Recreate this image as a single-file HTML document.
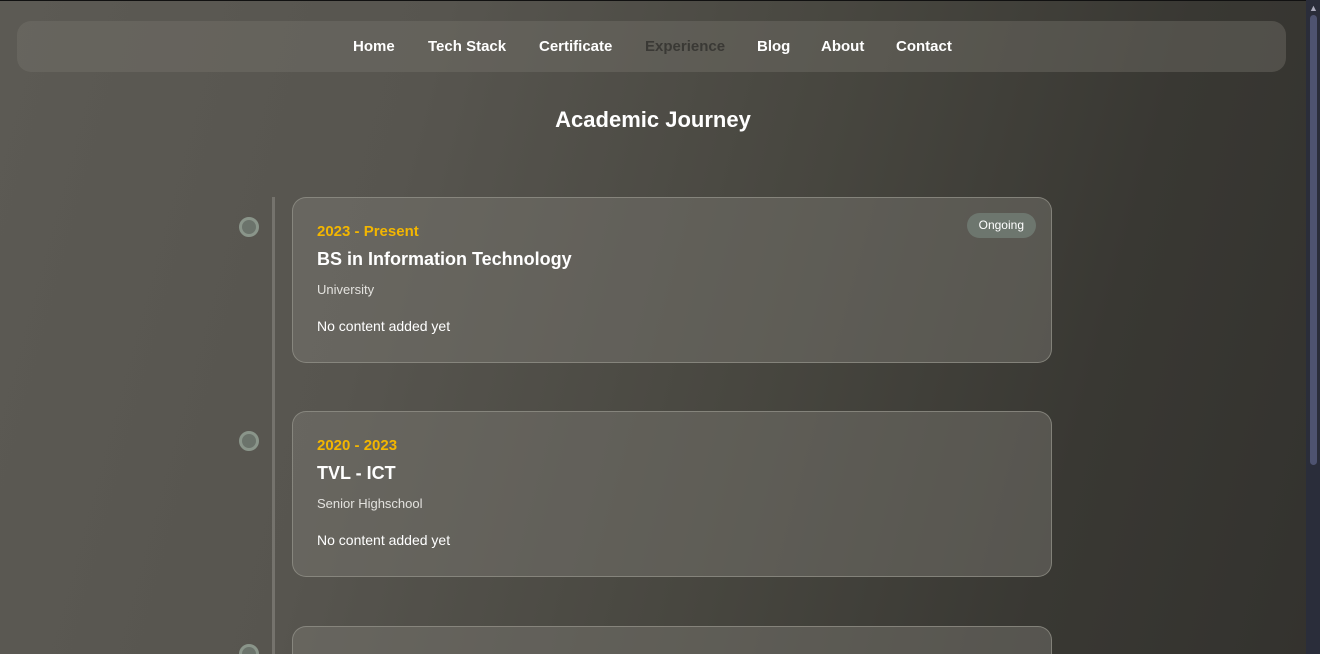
<!DOCTYPE html>
<html><head><meta charset="utf-8"><style>
*{margin:0;padding:0;box-sizing:border-box}
html,body{width:1320px;height:654px;overflow:hidden}
body{font-family:"Liberation Sans",sans-serif;position:relative;
background:linear-gradient(105deg,#5c5a54 0%,#57554f 30%,#47463f 58%,#393833 80%,#33322e 100%);}
.topline{position:absolute;left:0;top:0;width:1306px;height:1px;background:#111}
.sb{position:absolute;left:1306px;top:0;width:14px;height:654px;background:#2a2d3a}
.thumb{position:absolute;left:1310px;top:15px;width:7px;height:450px;background:#4e5370;border-radius:4px}
.arr{position:absolute;left:1309px;top:3px;color:#aab;font-size:9px}
.nav{position:absolute;left:17px;top:21px;width:1269px;height:51px;border-radius:14px;background:rgba(120,118,110,0.4)}
.n{position:absolute;top:38px;font-size:15px;font-weight:bold;color:#fff;line-height:17px}
h1{position:absolute;left:0;width:1306px;top:107px;text-align:center;font-size:22px;color:#fff;line-height:26px}
.line{position:absolute;left:272px;top:197px;width:3px;height:457px;background:#75736d}
.dot{position:absolute;left:239px;width:20px;height:20px;border-radius:50%;background:#6b736b;border:3px solid #8a958a}
.card{position:absolute;left:292px;width:760px;height:166px;border-radius:14px;border:1px solid rgba(150,148,140,0.7);background:rgba(125,123,115,0.45);overflow:hidden}
.yr{position:absolute;left:24px;top:25px;color:#f3b600;font-weight:bold;font-size:15px}
.tt{position:absolute;left:24px;top:51px;color:#fff;font-weight:bold;font-size:18px}
.sub{position:absolute;left:24px;top:84px;color:#e3e2de;font-size:13px}
.ct{position:absolute;left:24px;top:120px;color:#fff;font-size:14px}
.badge{position:absolute;right:15px;top:15px;height:25px;padding:0 12px;border-radius:13px;background:#6d766e;color:#fff;font-size:12px;line-height:25px}
</style></head><body>
<div class="topline"></div>
<div class="nav"></div>
<span class="n" style="left:353px">Home</span>
<span class="n" style="left:428px">Tech Stack</span>
<span class="n" style="left:539px">Certificate</span>
<span class="n" style="left:645px;color:#3a3935">Experience</span>
<span class="n" style="left:757px">Blog</span>
<span class="n" style="left:821px">About</span>
<span class="n" style="left:896px">Contact</span>
<h1>Academic Journey</h1>
<div class="line"></div>
<div class="dot" style="top:217px"></div>
<div class="dot" style="top:431px"></div>
<div class="dot" style="top:644px"></div>
<div class="card" style="top:197px">
<div class="yr">2023 - Present</div><div class="tt">BS in Information Technology</div>
<div class="sub">University</div><div class="ct">No content added yet</div>
<div class="badge">Ongoing</div></div>
<div class="card" style="top:411px">
<div class="yr">2020 - 2023</div><div class="tt">TVL - ICT</div>
<div class="sub">Senior Highschool</div><div class="ct">No content added yet</div></div>
<div class="card" style="top:626px;height:28px;border-bottom:none;border-radius:14px 14px 0 0"></div>
<div class="sb"></div><div class="thumb"></div><div class="arr">▲</div>
</body></html>
